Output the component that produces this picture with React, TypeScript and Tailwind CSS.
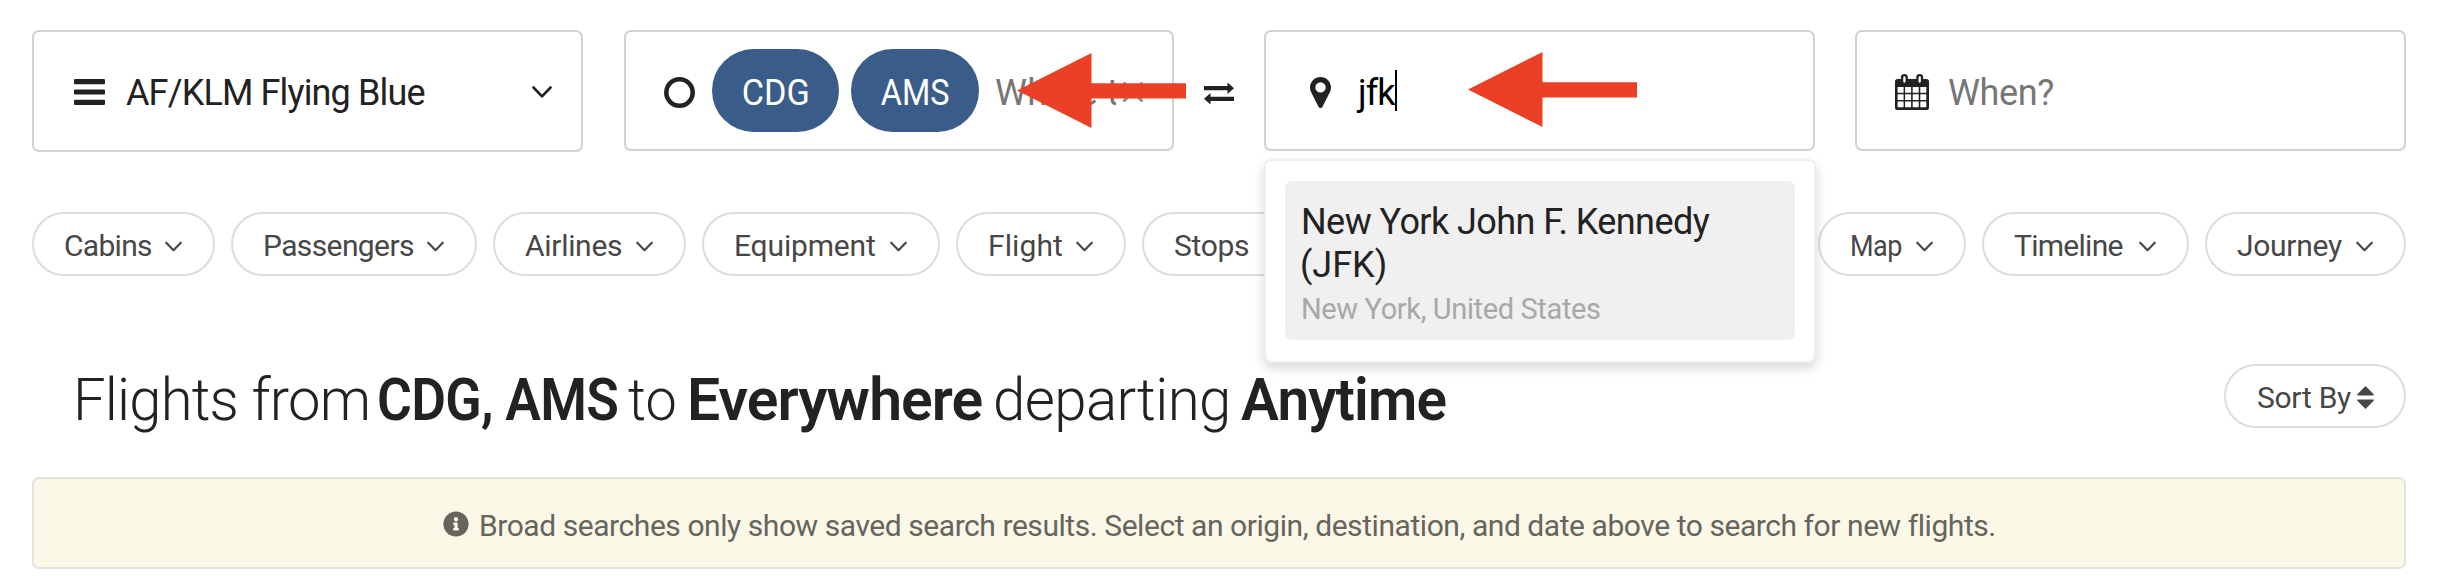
import type { ReactNode } from "react";
import { FaInfoCircle } from "react-icons/fa";

function Chevron({ className }: { className: string }) {
  return (
    <svg viewBox="0 0 20 12" fill="none" stroke="currentColor" strokeWidth="2.6" strokeLinecap="round" strokeLinejoin="round" className={className}>
      <path d="M1.5 1.5 10 10.3 18.5 1.5" />
    </svg>
  );
}

function BarsIcon() {
  return (
    <svg viewBox="0 0 31 26" fill="currentColor" className="mt-[2px] h-[26px] w-[31px] shrink-0">
      <rect width="31" height="5.2" rx="1.2" />
      <rect y="10.4" width="31" height="5.2" rx="1.2" />
      <rect y="20.8" width="31" height="5.2" rx="1.2" />
    </svg>
  );
}

function PinIcon() {
  return (
    <svg viewBox="0 0 21 31" fill="currentColor" fillRule="evenodd" className="mt-1 h-[31px] w-[21px] shrink-0">
      <path d="M10.5 0C4.7 0 0 4.7 0 10.5c0 1.6.3 3 .9 4.3l7.6 14.9a2.2 2.2 0 0 0 4 0l7.6-14.9c.6-1.3.9-2.7.9-4.3C21 4.7 16.3 0 10.5 0Zm0 5.2a5.2 5.2 0 1 1 0 10.4 5.200 5.200 0 0 1 0-10.400Z" />
    </svg>
  );
}

function CalendarIcon() {
  return (
    <svg viewBox="0 0 34 36" className="mt-[3px] h-[36px] w-[34px] shrink-0">
      <rect y="5" width="34" height="31" rx="2.6" fill="#222222" />
      <g fill="#ffffff">
        <path d="M2.6 13h6v5.8h-6zM10.1 13h6v5.8h-6zM17.7 13h6v5.8h-6zM25.3 13h6v5.8h-6z" />
        <path d="M2.6 20.2h6v5.8h-6zM10.1 20.2h6v5.8h-6zM17.7 20.2h6v5.8h-6zM25.3 20.2h6v5.8h-6z" />
        <path d="M2.6 27.5h6v5.8h-6zM10.1 27.5h6v5.8h-6zM17.7 27.5h6v5.8h-6zM25.3 27.5h6v5.8h-6z" />
      </g>
      <rect x="7.1" y="1.2" width="4.6" height="8.6" rx="2.3" fill="#ffffff" stroke="#222222" strokeWidth="2.3" />
      <rect x="22.4" y="1.2" width="4.6" height="8.6" rx="2.3" fill="#ffffff" stroke="#222222" strokeWidth="2.3" />
    </svg>
  );
}

function SwapIcon() {
  return (
    <svg viewBox="0 0 30 23" fill="currentColor" className="h-[23px] w-[30px]">
      <path d="M0 4h23.500V.4L30 6.200l-6.500 5.800V8.200H0z" />
      <path d="M30 14.800H6.500V11L0 16.800l6.500 5.800V19H30z" />
    </svg>
  );
}

function RedArrow({ className }: { className: string }) {
  return (
    <svg viewBox="0 0 169 75" fill="#eb4026" className={className}>
      <path d="M0 37.400 74.500 0v30.200H169v15.200H74.500V75z" />
    </svg>
  );
}

function Field({ className, children }: { className: string; children: ReactNode }) {
  return <div className={"flex items-center rounded-[7px] border-2 border-[#d1d1d1] " + className}>{children}</div>;
}

function Pill({ label, box, text }: { label: string; box: string; text: string }) {
  return (
    <button className={"flex h-16 shrink-0 items-center justify-between rounded-full border-2 border-[#dcdce1] pr-[31px] pl-[30px] text-[30px] leading-none text-[#474747] " + box}>
      <span className={"pt-[4px] whitespace-nowrap " + text}>{label}</span>
      <Chevron className="mt-[4px] h-[11px] w-[17px] shrink-0" />
    </button>
  );
}

export default function App() {
  return (
    <main className="h-[576px] w-[2444px] overflow-hidden bg-white pt-[30px] pr-[38px] pl-8 font-['Roboto',sans-serif] text-[#222222]">
      <div className="flex h-[122px] items-start text-[36px] leading-none">
        <Field className="h-[122px] w-[551px] pr-[29px] pl-[40px]">
          <BarsIcon />
          <span className="ml-[21px] pt-[4px] tracking-[-0.86px] whitespace-nowrap">AF/KLM Flying Blue</span>
          <Chevron className="mt-[2px] ml-auto h-[12px] w-[20px]" />
        </Field>

        <div className="relative ml-[41px]">
          <Field className="h-[121px] w-[550px] pl-[38px]">
            <svg viewBox="0 0 31 31" fill="none" className="mt-1 h-[31px] w-[31px] shrink-0">
              <circle cx="15.5" cy="15.5" r="13.2" stroke="currentColor" strokeWidth="4.5" />
            </svg>
            <span className="ml-[17px] flex h-[83px] w-[127px] shrink-0 items-center justify-center rounded-full bg-[#3a5c88] pt-[4px] text-white">
              <span className="scale-x-[0.95]">CDG</span>
            </span>
            <span className="ml-3 flex h-[83px] w-[128px] shrink-0 items-center justify-center rounded-full bg-[#3a5c88] pt-[4px] text-white">
              <span className="scale-x-[0.9]">AMS</span>
            </span>
            <span className="ml-4 w-[121px] overflow-hidden pt-[5px] tracking-[0.2px] whitespace-nowrap text-[#767676]">Where to?</span>
            <svg viewBox="0 0 20 20" fill="none" stroke="#8a8a8a" strokeWidth="3" strokeLinecap="round" className="mt-[3px] ml-[7px] h-[20px] w-[20px] shrink-0">
              <path d="M1.500 1.500l17 17M18.500 1.500l-17 17" />
            </svg>
          </Field>
          <RedArrow className="absolute top-[23px] left-[393px] h-[75px] w-[169px]" />
        </div>

        <div className="flex h-[126px] w-[90px] items-center justify-center">
          <SwapIcon />
        </div>

        <div className="relative">
          <Field className="h-[121px] w-[551px] pl-[44px]">
            <PinIcon />
            <span className="ml-[27px] pt-[5px] tracking-[-0.9px] text-black">jfk</span>
            <span className="h-[41px] w-[2px] bg-black" />
          </Field>
          <RedArrow className="absolute top-[22px] left-[204px] h-[75px] w-[169px]" />
          <div className="absolute top-[129px] left-0 z-10 h-[204px] w-[552px] rounded-[7px] border-2 border-[#eeeeee] bg-white px-[19px] pt-[20px] shadow-[0_5px_12px_rgba(0,0,0,0.16)]">
            <div className="h-[159px] rounded-[7px] bg-[#f0f0f0] pt-[20px] pl-4">
              <div className="leading-[43px] tracking-[-0.57px]">
                New York John F. Kennedy
                <br />
                <span className="-ml-px tracking-normal">(JFK)</span>
              </div>
              <div className="mt-[5px] text-[29px] leading-[34px] tracking-[-0.37px] text-[#a8a8a8]">New York, United States</div>
            </div>
          </div>
        </div>

        <Field className="ml-10 h-[121px] w-[551px] pl-[38px]">
          <CalendarIcon />
          <span className="ml-[19px] pt-[5px] tracking-[-0.4px] text-[#767676]">When?</span>
        </Field>
      </div>

      <div className="mt-[60px] flex gap-4">
        <Pill label="Cabins" box="w-[183px]" text="tracking-[-0.7px]" />
        <Pill label="Passengers" box="w-[246px]" text="tracking-[-0.61px]" />
        <Pill label="Airlines" box="w-[193px]" text="tracking-[-0.3px]" />
        <Pill label="Equipment" box="w-[238px]" text="tracking-[-0.16px]" />
        <Pill label="Flight" box="w-[170px]" text="tracking-[0.09px]" />
        <Pill label="Stops" box="w-[172px]" text="tracking-[-0.32px]" />
        <div className="ml-auto flex gap-4">
          <Pill label="Map" box="w-[148px]" text="tracking-[-0.5px] origin-left scale-x-[0.9]" />
          <Pill label="Timeline" box="w-[207px]" text="tracking-[-0.72px]" />
          <Pill label="Journey" box="w-[201px]" text="tracking-[-0.28px]" />
        </div>
      </div>

      <div className="mt-[88px] flex h-16 items-center justify-between">
        <h1 className="flex pt-[8px] pl-[41px] text-[60px] leading-none whitespace-nowrap">
          <span className="w-[304px] font-light">
            <span className="inline-block origin-left scale-x-[0.965] tracking-[-0.8px]">Flights from</span>
          </span>
          <span className="w-[251px] font-semibold">
            <span className="inline-block origin-left scale-x-[0.89] tracking-[-0.8px]">CDG, AMS</span>
          </span>
          <span className="w-[59px] font-light">
            <span className="inline-block origin-left scale-x-[0.93]">to</span>
          </span>
          <span className="w-[306px] font-semibold">
            <span className="inline-block origin-left scale-x-[0.98] tracking-[-0.9px]">Everywhere</span>
          </span>
          <span className="w-[248px] font-light">
            <span className="inline-block origin-left scale-x-[0.97] tracking-[-0.6px]">departing</span>
          </span>
          <span className="font-semibold">
            <span className="inline-block origin-left scale-x-[0.945] tracking-[-0.8px]">Anytime</span>
          </span>
        </h1>
        <button className="flex h-16 w-[182px] items-center rounded-full border-2 border-[#dcdce1] pl-[31px] text-[30px] leading-none text-[#474747]">
          <span className="pt-[4px] tracking-[-0.29px] whitespace-nowrap">Sort By</span>
          <svg viewBox="0 0 17 23" fill="currentColor" className="mt-[3px] ml-[6px] h-[23px] w-[17px] shrink-0">
            <path d="M8.500 0 16.700 8.300Q17 9.500 16 9.600H1Q0 9.500.3 8.300ZM8.500 23 16.700 14.700Q17 13.600 16 13.500H1Q0 13.600.3 14.700Z" />
          </svg>
        </button>
      </div>

      <div className="mt-[49px] flex h-[92px] items-center rounded-[7px] border-2 border-[#e3e3df] bg-[#fcf8e8] pl-[409px] text-[30px] leading-none text-[#66655d]">
        <FaInfoCircle className="mt-[2px] h-[26px] w-[26px] shrink-0" />
        <span className="ml-[10px] pt-[5px] tracking-[-0.44px] whitespace-nowrap">
          Broad searches only show saved search results. Select an origin, destination, and date above to search for new flights.
        </span>
      </div>
    </main>
  );
}
